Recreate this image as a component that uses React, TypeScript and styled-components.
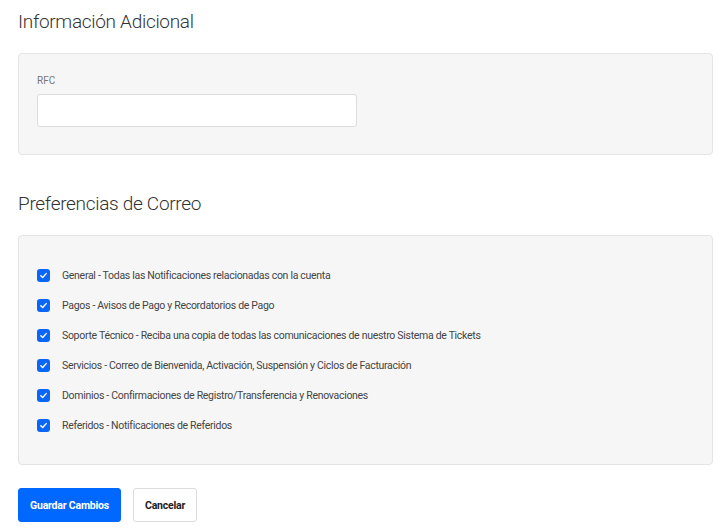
import styled, { createGlobalStyle } from "styled-components";

const GlobalStyle = createGlobalStyle`
  body {
    margin: 0;
    background: #fff;
    font-family: "Roboto", "Liberation Sans", sans-serif;
    color: #333;
  }
`;

const preferences = [
  "General - Todas las Notificaciones relacionadas con la cuenta",
  "Pagos - Avisos de Pago y Recordatorios de Pago",
  "Soporte Técnico - Reciba una copia de todas las comunicaciones de nuestro Sistema de Tickets",
  "Servicios - Correo de Bienvenida, Activación, Suspensión y Ciclos de Facturación",
  "Dominios - Confirmaciones de Registro/Transferencia y Renovaciones",
  "Referidos - Notificaciones de Referidos",
];

function CheckMark() {
  return (
    <svg width="9" height="9" viewBox="0 0 10 10" fill="none">
      <path d="M2 5.2 L4.1 7.2 L8 2.9" stroke="#fff" strokeWidth="1.6" strokeLinecap="round" strokeLinejoin="round" />
    </svg>
  );
}

function App() {
  return (
    <>
      <GlobalStyle />
      <Page>
        <Title>Información Adicional</Title>
        <Card>
          <Field>
            <FieldLabel>RFC</FieldLabel>
            <Input type="text" />
          </Field>
        </Card>
        <Title>Preferencias de Correo</Title>
        <Card $list>
          {preferences.map((p) => (
            <Row key={p}>
              <Box>
                <CheckMark />
              </Box>
              <RowText>{p}</RowText>
            </Row>
          ))}
        </Card>
        <Actions>
          <Button $primary>Guardar Cambios</Button>
          <Button>Cancelar</Button>
        </Actions>
      </Page>
    </>
  );
}

const Page = styled.div`
  padding: 8px 15px 0 18px;
  display: flex;
  flex-direction: column;
`;

const Title = styled.h2`
  margin: 0 0 17px;
  font-weight: 300;
  font-size: 19px;
  letter-spacing: -0.3px;
  line-height: 28px;
  color: #333;
`;

const Card = styled.div<{ $list?: boolean }>`
  background: #f6f6f6;
  border: 1px solid #e4e4e4;
  border-radius: 4px;
  padding: ${(p) => (p.$list ? "24px 18px 24px" : "20px 18px 27px")};
  margin-bottom: 35px;
  display: flex;
  flex-direction: column;
`;

const Field = styled.div`
  display: flex;
  flex-direction: column;
`;

const FieldLabel = styled.label`
  font-size: 10px;
  color: #777;
  line-height: 14px;
  margin-bottom: 6px;
`;

const Input = styled.input`
  width: 320px;
  height: 33px;
  box-sizing: border-box;
  background: #fff;
  border: 1px solid #dcdcdc;
  border-radius: 3px;
  outline: none;
`;

const Row = styled.div`
  display: flex;
  align-items: center;
  height: 30px;
  gap: 12px;
`;

const Box = styled.span`
  width: 13px;
  height: 13px;
  border-radius: 3px;
  background: #0a66f7;
  display: flex;
  align-items: center;
  justify-content: center;
`;

const RowText = styled.span`
  font-size: 10.5px;
  letter-spacing: -0.3px;
  color: #444;
`;

const Actions = styled.div`
  display: flex;
  gap: 12px;
  margin-top: -12px;
`;

const Button = styled.button<{ $primary?: boolean }>`
  height: 34px;
  padding: 0 11px;
  font-family: "Roboto", "Liberation Sans", sans-serif;
  font-size: 10.5px;
  letter-spacing: -0.2px;
  font-weight: 700;
  border-radius: 3px;
  border: 1px solid ${(p) => (p.$primary ? "#0068ff" : "#dcdcdc")};
  background: ${(p) => (p.$primary ? "#0068ff" : "#fff")};
  color: ${(p) => (p.$primary ? "#fff" : "#222")};
`;

export default App;
